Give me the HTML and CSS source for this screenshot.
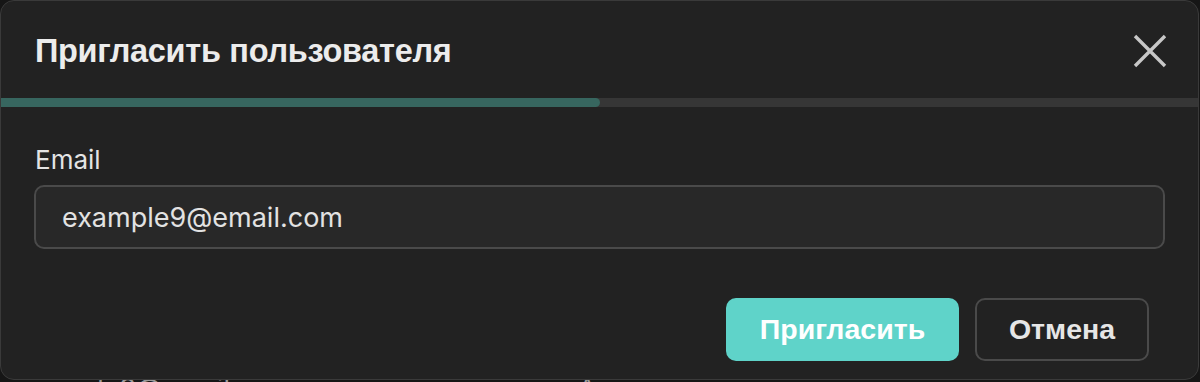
FILE: index.html
```html
<!DOCTYPE html>
<html lang="ru">
<head>
    <meta charset="UTF-8">
    <meta name="viewport" content="width=device-width, initial-scale=1.0">
    <title>Пригласить пользователя</title>
    <link rel="stylesheet" href="styles.css">
</head>
<body>

    <main class="page">
        <div class="user-row">
            <span class="user-email">example9@email.com</span>
            <span class="user-status">Активна на линии</span>
        </div>
    </main>

    <div class="modal">
        <div class="modal-head">
            <h2 class="modal-title">Пригласить пользователя</h2>
            <button class="close-btn" aria-label="Закрыть">
                <svg width="34" height="34" viewBox="0 0 34 34">
                    <path d="M2 2 L32 32 M32 2 L2 32" stroke="#c8c8c8" stroke-width="3.4" fill="none"/>
                </svg>
            </button>
        </div>

        <div class="progress">
            <div class="progress-fill" style="width: 50%"></div>
        </div>

        <div class="modal-body">
            <label class="field-label" for="email">Email</label>
            <input class="field-input" id="email" type="text" value="example9@email.com">
        </div>

        <div class="modal-foot">
            <button class="btn btn-primary">Пригласить</button>
            <button class="btn btn-outline">Отмена</button>
        </div>
    </div>

</body>
</html>
```

FILE: styles.css
```css
*{
    margin: 0;
    padding: 0;
    box-sizing: border-box;
}
html{
    overflow: hidden;
}
body{
    background-color: #161616;
    font-family: Inter, "Noto Sans", sans-serif;
    color: #e2e2e2;
    width: 1200px;
    height: 382px;
    overflow: hidden;
    position: relative;
}
.page{
    padding-top: 373px;
}
.user-row{
    display: flex;
    padding-left: 12px;
    font-size: 27px;
    line-height: 32px;
    color: #9a9a9a;
}
.user-email{
    width: 566px;
}
.modal{
    position: absolute;
    top: 0;
    left: 0;
    width: 1199px;
    height: 380px;
    background-color: #222222;
    border: 1px solid #3a3a3a;
    border-radius: 14px;
    overflow: hidden;
}
.modal-head{
    height: 97px;
    display: flex;
    justify-content: space-between;
    align-items: center;
    padding: 0 31px 0 34px;
}
.modal-title{
    font-family: "Liberation Sans", Arial, sans-serif;
    font-weight: 700;
    font-size: 32.5px;
    letter-spacing: -0.3px;
    color: #ececec;
    margin-top: 4px;
}
.close-btn{
    background: none;
    border: none;
    width: 34px;
    height: 34px;
    display: flex;
    margin-top: 3px;
}
.progress{
    height: 9px;
    background-color: #363636;
}
.progress-fill{
    height: 100%;
    background-color: #37665f;
    border-radius: 0 5px 5px 0;
}
.modal-body{
    padding: 37px 33px 0 33px;
    display: flex;
    flex-direction: column;
}
.field-label{
    font-size: 26px;
    color: #e4e4e4;
    padding-left: 1px;
    margin-bottom: 10px;
}
.field-input{
    height: 64px;
    width: 100%;
    background-color: #282828;
    border: 2px solid #4a4a4a;
    border-radius: 10px;
    padding: 0 26px;
    font-family: Inter, "Noto Sans", sans-serif;
    font-size: 27px;
    color: #e2e2e2;
    outline: none;
}
.modal-foot{
    display: flex;
    justify-content: flex-end;
    gap: 16px;
    padding: 49px 49px 0 0;
}
.btn{
    height: 63px;
    border-radius: 10px;
    font-family: "Liberation Sans", Arial, sans-serif;
    font-weight: 700;
    font-size: 28.5px;
}
.btn-primary{
    width: 233px;
    background-color: #5fd3c9;
    color: #ffffff;
    border: none;
}
.btn-outline{
    width: 174px;
    background-color: transparent;
    color: #e6e6e6;
    border: 2px solid #4a4a4a;
}
```
